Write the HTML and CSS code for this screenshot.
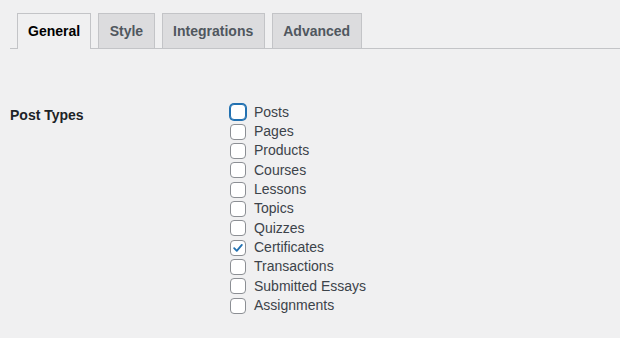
FILE: index.html
```html
<!DOCTYPE html>
<html>
<head>
<meta charset="utf-8">
<link rel="stylesheet" href="styles.css">
</head>
<body>
<div class="wrap">
  <nav class="tabs">
    <a class="tab active">General</a>
    <a class="tab">Style</a>
    <a class="tab">Integrations</a>
    <a class="tab">Advanced</a>
  </nav>
  <div class="form-row">
    <div class="label">Post Types</div>
    <div class="options">
      <label class="opt"><span class="box focus"></span>Posts</label>
      <label class="opt"><span class="box"></span>Pages</label>
      <label class="opt"><span class="box"></span>Products</label>
      <label class="opt"><span class="box"></span>Courses</label>
      <label class="opt"><span class="box"></span>Lessons</label>
      <label class="opt"><span class="box"></span>Topics</label>
      <label class="opt"><span class="box"></span>Quizzes</label>
      <label class="opt"><span class="box checked"><svg viewBox="0 0 16 16" width="16" height="16"><path d="M3.6 8.2 L6.6 11.2 L12.4 4.4" fill="none" stroke="#2271b1" stroke-width="2.1" stroke-linecap="round" stroke-linejoin="round"/></svg></span>Certificates</label>
      <label class="opt"><span class="box"></span>Transactions</label>
      <label class="opt"><span class="box"></span>Submitted Essays</label>
      <label class="opt"><span class="box"></span>Assignments</label>
    </div>
  </div>
</div>
</body>
</html>
```
FILE: styles.css
```css
* { box-sizing: border-box; }
html, body {
  margin: 0;
  padding: 0;
  background: #f0f0f1;
  font-family: "Liberation Sans", Arial, sans-serif;
  font-size: 14px;
  color: #3c434a;
}
.wrap {
  padding: 13px 0 0 10px;
}
.tabs {
  display: flex;
  border-bottom: 1px solid #c3c4c7;
  height: 36px;
}
.tab {
  display: block;
  margin-left: 7px;
  height: 35px;
  padding: 0 10.5px;
  border: 1px solid #c3c4c7;
  border-bottom: none;
  background: #dcdcde;
  color: #50575e;
  font-weight: bold;
  font-size: 14px;
  line-height: 34px;
  text-decoration: none;
}
.tab.active {
  padding: 0 10px;
  background: #f0f0f1;
  color: #000;
  height: 36px;
  margin-bottom: -1px;
}
.form-row {
  display: flex;
  margin-top: 53px;
}
.label {
  width: 220px;
  padding-top: 4px;
  line-height: 19.3px;
  font-weight: bold;
  color: #1d2327;
}
.options {
  display: flex;
  flex-direction: column;
  padding-top: 0.5px;
}
.opt {
  display: flex;
  align-items: center;
  height: 19.35px;
  line-height: 19.35px;
}
.box {
  width: 16px;
  height: 16px;
  margin-right: 8px;
  border: 1px solid #8c8f94;
  border-radius: 4px;
  background: #fff;
  display: flex;
  align-items: center;
  justify-content: center;
}
.box svg { display: block; }
.box.focus {
  border-color: #2271b1;
  box-shadow: 0 0 0 1px #2271b1;
}
```
